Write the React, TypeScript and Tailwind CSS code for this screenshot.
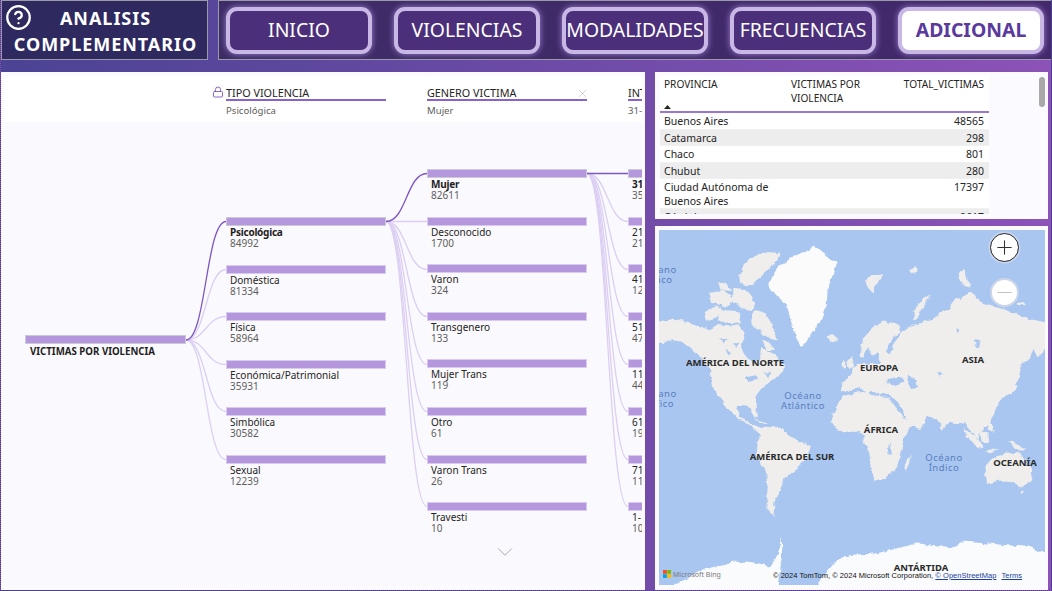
import { CircleHelp, Lock, X, Plus, Minus, ChevronDown } from "lucide-react";

const col2 = [["Psicológica", "84992"], ["Doméstica", "81334"], ["Física", "58964"], ["Económica/Patrimonial", "35931"], ["Simbólica", "30582"], ["Sexual", "12239"]];
const col3 = [["Mujer", "82611"], ["Desconocido", "1700"], ["Varon", "324"], ["Transgenero", "133"], ["Mujer Trans", "119"], ["Otro", "61"], ["Varon Trans", "26"], ["Travesti", "10"]];
const col4 = [["31-40", "35210"], ["21-30", "21980"], ["41-50", "12760"], ["51-60", "4710"], ["11-20", "4402"], ["61-70", "1985"], ["71-80", "1120"], ["1-10", "1024"]];
const rowY = [173.5, 221.5, 269.5, 316.5, 364.5, 411.5, 459.5, 506.5];
const y2 = [221.5, 269.5, 316.5, 364.5, 411.5, 459.5];

function curve(x1: number, y1: number, x2: number, y2v: number) {
  const m = (x1 + x2) / 2;
  return `M${x1} ${y1} C${m} ${y1} ${m} ${y2v} ${x2} ${y2v}`;
}

function Node({ name, value, selected }: { name: string; value: string; selected?: boolean }) {
  return (
    <div className="h-[47.6px] w-[160px] shrink-0">
      <div className={`h-[9px] border bg-[#b497dd] ${selected ? "border-[#cdc8d6]" : "border-[#d8cbef]"}`} />
      <div className={`mt-[1px] whitespace-nowrap pl-1 text-[10px] leading-[11px] ${selected ? "font-bold tracking-[-0.25px] text-[#1f1e1d]" : "text-[#252423]"}`}>{name}</div>
      <div className="whitespace-nowrap pl-1 text-[10px] leading-[11px] text-[#605e5c]">{value}</div>
    </div>
  );
}

function NavButton({ label, active }: { label: string; active?: boolean }) {
  return (
    <div
      className={`flex h-[47px] w-[146px] shrink-0 items-center justify-center whitespace-nowrap rounded-[11px] border-[4px] border-[#c9b8e6] text-[19.4px] shadow-[0_0_6px_#9d83d0] ${
        active ? "bg-white font-bold text-[#5a3a9c]" : "bg-[#4c2f7b] text-white"
      }`}
    >
      {label}
    </div>
  );
}

const land = [
  // North America mainland
  "-10,292 45,284 80,286 110,298 135,308 165,312 190,300 225,305 255,300 268,335 258,365 270,395 300,420 315,400 318,370 340,378 362,390 390,420 388,438 362,455 340,478 318,492 304,510 302,540 310,578 298,578 288,552 262,542 245,547 252,572 288,600 270,594 232,567 212,540 188,510 170,480 166,440 148,410 126,385 106,370 80,350 50,345 20,357 -10,354",
  // Central America
  "272,585 298,600 320,610 335,613 316,628 300,617",
  // Cuba
  "300,582 330,590 345,597 320,594",
  // South America
  "308,650 328,608 372,606 402,632 468,664 452,696 427,732 388,762 374,797 358,832 356,872 334,852 338,787 333,737 305,692",
  // Eurasia
  "612,395 625,340 650,312 690,285 732,302 738,322 708,340 695,375 708,385 725,342 745,318 775,300 830,285 855,265 880,252 900,226 950,198 968,222 1000,240 1080,265 1120,282 1195,296 1195,352 1147,397 1135,372 1125,402 1102,412 1088,470 1062,507 1032,527 1012,577 1002,602 987,602 967,642 950,622 930,592 905,594 885,590 862,614 845,584 815,572 812,592 790,614 760,592 728,530 700,507 665,507 650,497 640,512 615,487 590,497 558,499 563,470 588,448 590,430 625,413 650,418 680,413 668,385 650,395 640,365 625,398",
  // Africa
  "533,577 543,545 563,513 620,500 650,510 700,516 722,550 747,580 775,592 747,642 737,682 727,722 692,762 660,770 646,722 643,682 630,657 618,622 548,617 528,587",
  // UK and Ireland
  "575,420 590,392 597,425 580,435",
  "560,415 570,410 570,425 560,428",
  // Iceland
  "512,338 535,328 545,342 525,352",
  // Madagascar
  "745,727 767,688 762,720 750,737",
  // Japan
  "1050,495 1075,470 1084,490 1060,512",
  "1075,440 1092,445 1080,462",
  // Indonesia and neighbours
  "925,605 955,630 985,665 970,668 935,635",
  "975,620 1000,622 1002,650 980,652",
  "1000,590 1015,600 1012,625 1002,612",
  "1060,648 1095,658 1114,674 1080,672",
  "985,672 1030,676 1000,682",
  // Australia
  "988,725 1010,703 1040,691 1060,681 1075,688 1090,678 1107,708 1132,735 1127,772 1095,787 1060,767 1030,767 993,777",
  "1098,795 1108,795 1103,805",
  // Canadian arctic
  "255,150 280,100 330,80 378,85 352,125 322,150 292,182 258,178",
  "162,205 205,196 240,222 218,245 172,235",
  "232,188 272,192 302,235 290,255 262,250 232,228",
  "300,255 332,265 354,310 370,348 345,342 312,318 288,290",
  "196,255 250,258 262,295 215,298 186,285",
  "148,262 185,242 205,252 180,278 152,288",
  "190,172 218,176 228,198 195,194",
  "320,345 345,352 360,375 335,375",
  // Svalbard
  "630,165 650,150 685,150 665,175 655,205 640,190",
  // Novaya Zemlya
  "770,285 790,235 830,207 805,245 785,280",
  // Russian arctic
  "910,150 925,130 935,165 950,185 925,180",
  "760,135 785,125 790,140 765,145",
  "1085,232 1110,228 1115,240 1090,240",
  "1020,225 1040,222 1040,232 1022,232",
];

const lakes = [
  "695,462 735,455 745,470 715,478 695,475",
  "762,452 778,455 786,488 768,492 760,472",
  "270,455 300,448 312,462 285,470",
  "330,445 348,440 342,455",
  "212,372 228,385 220,395",
  "235,350 250,358 240,370",
  "195,340 215,345 205,355",
  "960,345 975,350 972,370 962,365",
  "905,310 915,315 905,322",
  "845,440 860,445 850,452",
  "700,690 706,650 710,692",
];

const antarctica = [
  "1195,995 1120,965 1050,960 990,955 930,950 880,970 840,960 780,955 730,970 665,985 585,990 545,1005 525,1030 480,1085 470,1130 1195,1130",
  "380,935 368,985 345,1025 310,1015 280,1010 232,1010 210,1020 150,1030 100,1060 40,1085 -10,1130 360,1130 375,1040 382,980",
];

const mapLabels: [string, number, number][] = [
  ["AMÉRICA DEL NORTE", 735, 363],
  ["EUROPA", 879, 368],
  ["ASIA", 973, 360],
  ["ÁFRICA", 881, 430],
  ["AMÉRICA DEL SUR", 792, 457],
  ["OCEANÍA", 1015, 463],
  ["ANTÁRTIDA", 921, 568],
];

const oceans: [string, number, number][] = [
  ["Océano", 803, 396],
  ["Atlántico", 803, 406],
  ["Océano", 944, 458],
  ["Índico", 944, 468],
  ["Océano", 658, 270],
  ["Ártico", 658, 280],
  ["Océano", 658, 394],
  ["Pacífico", 655, 404],
];

function Row({ name, value, shaded, tall }: { name: string; value: string; shaded?: boolean; tall?: boolean }) {
  return (
    <div className={`flex border-b border-[#f0f0f0] px-1 text-[10.5px] leading-[14px] text-[#252423] ${shaded ? "bg-[#ededed]" : "bg-white"} ${tall ? "h-[30px] pt-[1px]" : "h-[16.5px] pt-[1px]"}`}>
      <div className="w-[127px] shrink-0 pr-[8px]">{name}</div>
      <div className="w-[70px]" />
      <div className="flex-1 pr-[1px] text-right">{value}</div>
    </div>
  );
}

export default function App() {
  return (
    <div className="flex h-[591px] w-[1052px] flex-col overflow-hidden border-x border-b border-dotted border-[#4a3a90] bg-[linear-gradient(90deg,#4b4393,#8c52b8)] font-['Noto_Sans','Open_Sans',sans-serif]">
      {/* Header */}
      <div className="flex h-[60px] shrink-0 gap-[10px]">
        <div className="relative flex w-[207px] shrink-0 flex-col items-center justify-center border border-[#9a9aa8] bg-[#2e2a5f] pl-[2px] pt-[2px] text-[18px] font-bold leading-[26px] tracking-[0.95px] text-white">
          <CircleHelp className="absolute left-[3px] top-[3px] text-white" size={27} strokeWidth={2} />
          <div>ANALISIS</div>
          <div>COMPLEMENTARIO</div>
        </div>
        <div className="flex flex-1 items-center gap-[22px] border-y border-l border-[#9a9aa8] bg-[linear-gradient(90deg,#3d2c66,#43286c)] pl-[7px]">
          <NavButton label="INICIO" />
          <NavButton label="VIOLENCIAS" />
          <NavButton label="MODALIDADES" />
          <NavButton label="FRECUENCIAS" />
          <NavButton label="ADICIONAL" active />
        </div>
      </div>

      {/* Main */}
      <div className="mt-[12px] flex h-[518px] gap-[10px]">
        {/* Decomposition tree */}
        <div className="h-full w-[644px] shrink-0 bg-[#fbfafe] pb-1 pl-1 pt-1">
          <div className="relative flex h-full w-[637px] flex-col overflow-hidden">
            <div className="flex h-[46px] shrink-0 gap-[41px] bg-white pl-[221px] pt-[10px]">
              <div className="relative w-[160px] shrink-0">
                <Lock className="absolute left-[-14px] top-[0px] text-[#7e57c2]" size={12} strokeWidth={1.8} />
                <div className="h-[15px] border-b-2 border-[#8a63c8] text-[10.8px] leading-[14px] text-[#252423]">TIPO VIOLENCIA</div>
                <div className="mt-[3px] text-[9.6px] leading-[13px] text-[#605e5c]">Psicológica</div>
              </div>
              <div className="relative w-[160px] shrink-0">
                <X className="absolute right-[-2px] top-[1px] text-[#b0b0b0]" size={13} strokeWidth={1} />
                <div className="h-[15px] border-b-2 border-[#8a63c8] text-[10.8px] leading-[14px] text-[#252423]">GENERO VICTIMA</div>
                <div className="mt-[3px] text-[9.6px] leading-[13px] text-[#605e5c]">Mujer</div>
              </div>
              <div className="relative w-[160px] shrink-0">
                <div className="h-[15px] border-b-2 border-[#8a63c8] text-[10.8px] leading-[14px] text-[#252423]">INTERVALO EDAD</div>
                <div className="mt-[3px] text-[9.6px] leading-[13px] text-[#605e5c]">31-40</div>
              </div>
            </div>

            <div className="relative flex flex-1 bg-[#faf9fd] pl-[20px]">
              <svg className="absolute left-0 top-0 h-[464px] w-[637px]" viewBox="5 122 637 464" fill="none">
                {y2.slice(1).map((y) => (
                  <path key={y} d={curve(186, 340, 226, y)} stroke="#dccff3" strokeWidth="1.3" />
                ))}
                <path d={curve(186, 340, 226, y2[0])} stroke="#7e57c2" strokeWidth="1.3" />
                {rowY.filter((_, i) => i > 0).map((y) => (
                  <path key={y} d={curve(386, 221.5, 427, y)} stroke="#dccff3" strokeWidth="1.3" />
                ))}
                <path d={curve(386, 221.5, 427, rowY[0])} stroke="#7e57c2" strokeWidth="1.3" />
                {rowY.filter((_, i) => i > 0).map((y) => (
                  <path key={y} d={curve(587, 173.5, 628, y)} stroke="#dccff3" strokeWidth="1.3" />
                ))}
                <path d={curve(587, 173.5, 628, 173.5)} stroke="#7e57c2" strokeWidth="1.5" />
              </svg>

              <div className="relative w-[161px] shrink-0 pt-[213px]">
                <div className="h-[9px] border border-[#cdc8d6] bg-[#b497dd]" />
                <div className="mt-[2px] whitespace-nowrap pl-[5px] text-[9.7px] font-bold leading-[11px] text-[#1f1e1d]">VICTIMAS POR VIOLENCIA</div>
              </div>
              <div className="relative ml-[40px] flex w-[160px] shrink-0 flex-col pt-[95px]">
                {col2.map(([n, v], i) => (
                  <Node key={n} name={n} value={v} selected={i === 0} />
                ))}
              </div>
              <div className="relative ml-[41px] flex w-[160px] shrink-0 flex-col pt-[47px]">
                {col3.map(([n, v], i) => (
                  <Node key={n} name={n} value={v} selected={i === 0} />
                ))}
              </div>
              <div className="relative ml-[41px] flex w-[160px] shrink-0 flex-col pt-[47px]">
                {col4.map(([n, v], i) => (
                  <Node key={n} name={n} value={v} selected={i === 0} />
                ))}
              </div>
              <ChevronDown className="absolute left-[487px] top-[417px] text-[#a8a8a8]" size={26} strokeWidth={0.9} />
            </div>
          </div>
        </div>

        {/* Right column */}
        <div className="flex w-[393px] shrink-0 flex-col gap-[7px]">
          {/* Table */}
          <div className="relative h-[147px] shrink-0 bg-[#fbfafe] pl-[5px] pt-1">
            <div className="h-[138px] w-[329px] overflow-hidden bg-white">
              <div className="relative flex h-[37px] border-b-2 border-[#9a78cf] px-1 text-[10.1px] leading-[14px] text-[#252423]">
                <div className="w-[127px] shrink-0 pt-[1px]">PROVINCIA</div>
                <div className="w-[90px] shrink-0 pt-[1px]">VICTIMAS POR VIOLENCIA</div>
                <div className="flex-1 whitespace-nowrap pr-[1px] pt-[1px] text-right">TOTAL_VICTIMAS</div>
                <svg className="absolute bottom-[2px] left-[4px] h-[4px] w-[7px]" viewBox="0 0 7 4">
                  <path d="M3.5 0 L7 4 L0 4 Z" fill="#252423" />
                </svg>
              </div>
              <Row name="Buenos Aires" value="48565" />
              <Row name="Catamarca" value="298" shaded />
              <Row name="Chaco" value="801" />
              <Row name="Chubut" value="280" shaded />
              <Row name="Ciudad Autónoma de Buenos Aires" value="17397" tall />
              <Row name="Córdoba" value="9617" shaded />
            </div>
            <div className="absolute right-[3px] top-[5px] h-[30px] w-[6px] rounded-full bg-[#a9a9a9]" />
          </div>

          {/* Map */}
          <div className="h-[364px] shrink-0 bg-[#fbfafe] pl-1 pt-1">
            <div className="relative h-[355px] w-[386px] overflow-hidden bg-[#a9c6f0]">
              <svg className="absolute inset-0 h-[355px] w-[386px]" viewBox="12 15 1158 1065">
                <defs>
                  <filter id="coast" filterUnits="userSpaceOnUse" x="-30" y="-30" width="1260" height="1190">
                    <feTurbulence type="fractalNoise" baseFrequency="0.045" numOctaves="3" seed="7" />
                    <feDisplacementMap in="SourceGraphic" scale="16" xChannelSelector="R" yChannelSelector="G" />
                    <feGaussianBlur stdDeviation="0.9" />
                  </filter>
                </defs>
                <g filter="url(#coast)">
                  {land.map((p, i) => (
                    <polygon key={i} points={p} fill="#efeeec" />
                  ))}
                  <polygon points="340,180 368,125 420,92 480,65 515,92 547,115 518,190 515,240 490,300 440,365 418,320 395,240 348,195" fill="#fbfbfb" />
                  {lakes.map((p, i) => (
                    <polygon key={i} points={p} fill="#a9c6f0" />
                  ))}
                  {antarctica.map((p, i) => (
                    <polygon key={i} points={p} fill="#fafbfc" />
                  ))}
                </g>
              </svg>
              {oceans.map(([t, x, y], i) => (
                <span
                  key={i}
                  style={{ left: x - 659, top: y - 230 }}
                  className="absolute -translate-x-1/2 -translate-y-1/2 whitespace-nowrap text-[9.5px] leading-none tracking-[0.5px] text-[#5a7fc0]"
                >
                  {t}
                </span>
              ))}
              {mapLabels.map(([t, x, y]) => (
                <span
                  key={t}
                  style={{ left: x - 659, top: y - 230 }}
                  className="absolute -translate-x-1/2 -translate-y-1/2 whitespace-nowrap text-[9.5px] font-bold leading-none text-[#2b2b2b]"
                >
                  {t}
                </span>
              ))}

              <div className="absolute left-[331px] top-[3px] flex h-[29px] w-[29px] items-center justify-center rounded-full border border-[#222] bg-white shadow-[0_0_0_1.5px_#c9d6ee]">
                <Plus className="text-[#333]" size={23} strokeWidth={1.1} />
              </div>
              <div className="absolute left-[331px] top-[48px] flex h-[29px] w-[29px] items-center justify-center rounded-full border-2 border-[#cdd6e8] bg-white">
                <Minus className="text-[#c4c4c4]" size={23} strokeWidth={1.1} />
              </div>

              <div className="absolute bottom-[7px] left-[4px] flex items-center gap-[2px]">
                <svg className="h-[8px] w-[8px]" viewBox="0 0 8 8">
                  <rect width="3.8" height="3.8" fill="#f25022" />
                  <rect x="4.2" width="3.8" height="3.8" fill="#7fba00" />
                  <rect y="4.2" width="3.8" height="3.8" fill="#00a4ef" />
                  <rect x="4.2" y="4.2" width="3.8" height="3.8" fill="#ffb900" />
                </svg>
                <span className="text-[7px] leading-none text-[#7a7a7a]">Microsoft Bing</span>
              </div>
              <div className="absolute bottom-[6px] left-[114px] whitespace-nowrap font-['Liberation_Sans',sans-serif] text-[7.5px] leading-none tracking-[0.03px] text-[#111]">
                © 2024 TomTom, © 2024 Microsoft Corporation, <span className="text-[#1a3fa0] underline">© OpenStreetMap</span> <span className="ml-[3px] text-[#1a3fa0] underline">Terms</span>
              </div>
            </div>
          </div>
        </div>
      </div>
    </div>
  );
}
